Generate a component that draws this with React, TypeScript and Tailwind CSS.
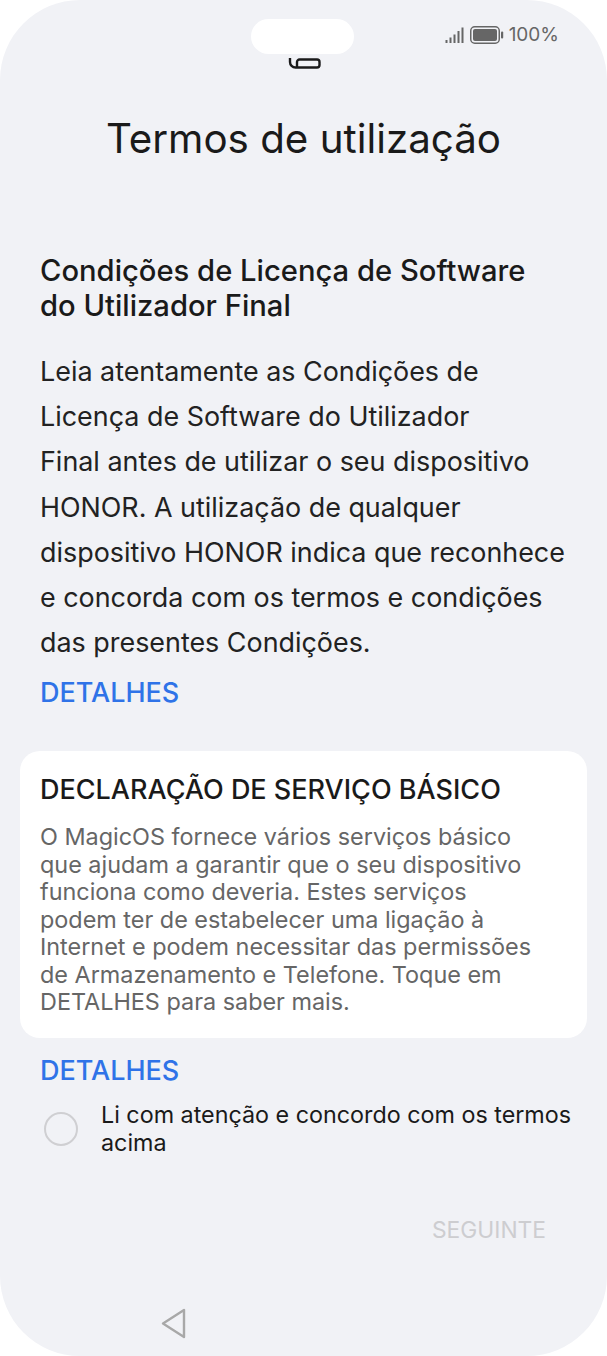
const bodyLines = [
  'Leia atentamente as Condições de',
  'Licença de Software do Utilizador',
  'Final antes de utilizar o seu dispositivo',
  'HONOR. A utilização de qualquer',
  'dispositivo HONOR indica que reconhece',
  'e concorda com os termos e condições',
  'das presentes Condições.',
];

const cardLines = [
  'O MagicOS fornece vários serviços básico',
  'que ajudam a garantir que o seu dispositivo',
  'funciona como deveria. Estes serviços',
  'podem ter de estabelecer uma ligação à',
  'Internet e podem necessitar das permissões',
  'de Armazenamento e Telefone. Toque em',
  'DETALHES para saber mais.',
];

function StatusIcons() {
  return (
    <div className="flex items-center gap-[5px] text-[#666]">
      <svg width="20" height="16" viewBox="0 0 20 16" fill="currentColor">
        <rect x="0.5" y="13" width="2" height="3" />
        <rect x="4.5" y="10.5" width="2" height="5.5" />
        <rect x="8.5" y="7.5" width="2" height="8.5" />
        <rect x="12.5" y="4" width="2" height="12" />
        <rect x="16.5" y="0.5" width="2" height="15.5" />
      </svg>
      <svg width="34" height="18" viewBox="0 0 34 18">
        <rect x="0.75" y="0.75" width="28.5" height="16.5" rx="4" fill="none" stroke="currentColor" strokeWidth="1.5" />
        <rect x="3" y="3" width="24" height="12" rx="2" fill="currentColor" />
        <rect x="31" y="5.5" width="2.2" height="7" rx="1" fill="currentColor" />
      </svg>
      <span className="text-[19px] leading-none">100%</span>
    </div>
  );
}

export default function App() {
  return (
    <div className="h-[1356px] w-[607px] bg-white font-['Inter',sans-serif]">
      <div className="relative h-full w-full overflow-hidden rounded-[80px] bg-[#f1f2f6]">
        {/* clipped icon under the camera pill */}
        <div className="absolute left-[288px] top-[58px] h-[11px] w-[33px] overflow-hidden">
          <svg width="33" height="11" viewBox="0 0 33 11" fill="none" stroke="#1a1a1a" strokeWidth="2.4">
            <path d="M2 0v4a5.5 5.5 0 0 0 5.5 5.5H29a2.5 2.5 0 0 0 2.5-2.5V4A2.5 2.5 0 0 0 29 1.5H11.5a2.5 2.5 0 0 0-2.5 2.5v5" />
          </svg>
        </div>
        <div className="absolute left-[251px] top-[19px] h-[35px] w-[103px] rounded-full bg-white" />

        <div className="flex h-[44px] items-end justify-end pr-[48px]">
          <StatusIcons />
        </div>

        <h1 className="mt-[71px] text-center text-[40.3px] font-normal leading-[48px] text-[#1a1a1a]">
          Termos de utilização
        </h1>

        <div className="px-[40px] pt-[90px]">
          <h2 className="text-[29.2px] font-[450] leading-[35px] text-[#1a1a1a]">
            Condições de Licença de Software
            <br />
            do Utilizador Final
          </h2>
          <div className="mt-[26px] text-[26.9px] leading-[45.2px] text-[#222]">
            {bodyLines.map((l) => (
              <div key={l} className="whitespace-nowrap">{l}</div>
            ))}
          </div>
          <div className="mt-[10px] text-[27px] font-[450] leading-[36px] text-[#2f73e8]">DETALHES</div>
        </div>

        <div className="mx-[20px] mt-[40px] h-[287px] rounded-[20px] bg-white px-[20px] pt-[21px]">
          <div className="text-[27px] font-[450] leading-[36px] text-[#1a1a1a]">DECLARAÇÃO DE SERVIÇO BÁSICO</div>
          <div className="mt-[15px] text-[23.4px] leading-[27.5px] text-[#666]">
            {cardLines.map((l) => (
              <div key={l} className="whitespace-nowrap">{l}</div>
            ))}
          </div>
        </div>

        <div className="px-[40px] pt-[15px] text-[27px] font-[450] leading-[36px] text-[#2f73e8]">DETALHES</div>

        <div className="mt-[12px] flex items-center pl-[44px]">
          <div className="h-[34px] w-[34px] rounded-full border-[2px] border-[#cfcfd2]" />
          <div className="ml-[23px] w-[490px] text-[23.3px] leading-[28px] text-[#1a1a1a]">
            Li com atenção e concordo com os termos acima
          </div>
        </div>

        <div className="mt-[57px] pr-[61px] text-right text-[22.8px] leading-[32px] text-[#cdcdd0]">SEGUINTE</div>

        <div className="mt-[62px] pl-[160px]">
          <svg width="27" height="31" viewBox="0 0 27 31" fill="none" stroke="#a8a8a8" strokeWidth="2.4" strokeLinejoin="round">
            <path d="M24 2v27L3 15.5z" />
          </svg>
        </div>
      </div>
    </div>
  );
}
